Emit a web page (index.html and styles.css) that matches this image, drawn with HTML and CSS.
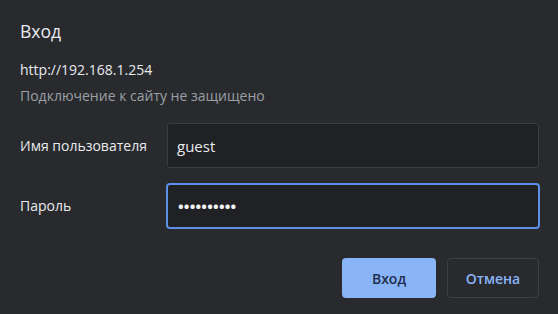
FILE: index.html
```html
<!DOCTYPE html>
<html lang="ru">
<head>
<meta charset="utf-8">
<link rel="stylesheet" href="styles.css">
</head>
<body>
<div class="dialog">
  <h1 class="title">Вход</h1>
  <div class="origin">http://192.168.1.254</div>
  <div class="warning">Подключение к сайту не защищено</div>
  <div class="form">
    <label class="label">Имя пользователя</label>
    <div class="field"><span class="value">guest</span></div>
    <label class="label">Пароль</label>
    <div class="field focused"><span class="dots">••••••••••</span></div>
  </div>
  <div class="buttons">
    <button class="btn primary">Вход</button>
    <button class="btn secondary">Отмена</button>
  </div>
</div>
</body>
</html>
```
FILE: styles.css
```css
html, body {
  margin: 0;
  padding: 0;
  background: #292a2d;
  width: 558px;
  height: 314px;
  overflow: hidden;
}
.dialog {
  font-family: "Open Sans", "Noto Sans", sans-serif;
  color: #e8eaed;
  padding: 17px 19px 0 20px;
  display: flex;
  flex-direction: column;
}
.title {
  font-size: 17.5px;
  font-weight: 400;
  margin: 0;
  line-height: 28px;
}
.origin {
  font-size: 14px;
  line-height: 20px;
  margin-top: 15px;
}
.warning {
  font-size: 14px;
  line-height: 20px;
  margin-top: 6px;
  color: #9aa0a6;
}
.form {
  display: grid;
  grid-template-columns: 147px 1fr;
  row-gap: 14px;
  align-items: center;
  margin-top: 17px;
}
.label {
  font-size: 14px;
}
.field {
  height: 45px;
  box-sizing: border-box;
  border: 1px solid #3c3d40;
  border-radius: 3px;
  background: #202124;
  display: flex;
  align-items: center;
  padding-left: 9px;
  font-size: 15px;
}
.field.focused {
  height: 46px;
  border: 2px solid #5b8fe8;
  border-radius: 4px;
  margin-left: -1px;
  margin-right: -1px;
  margin-top: 1px;
}
.dots {
  font-size: 15px;
  letter-spacing: 0.2px;
  font-weight: 700;
  padding-left: 1px;
  color: #f1f3f4;
}
.buttons {
  display: flex;
  justify-content: flex-end;
  gap: 11px;
  margin-top: 29px;
}
.btn {
  font-family: "Open Sans", "Noto Sans", sans-serif;
  font-size: 14px;
  font-weight: 600;
  height: 40px;
  width: 94px;
  border-radius: 4px;
  box-sizing: border-box;
}
.primary {
  background: #8ab4f8;
  border: none;
  color: #1f2d4d;
}
.secondary {
  background: #292a2d;
  border: 1px solid #3c4043;
  color: #8ab4f8;
  width: 92px;
}
```
